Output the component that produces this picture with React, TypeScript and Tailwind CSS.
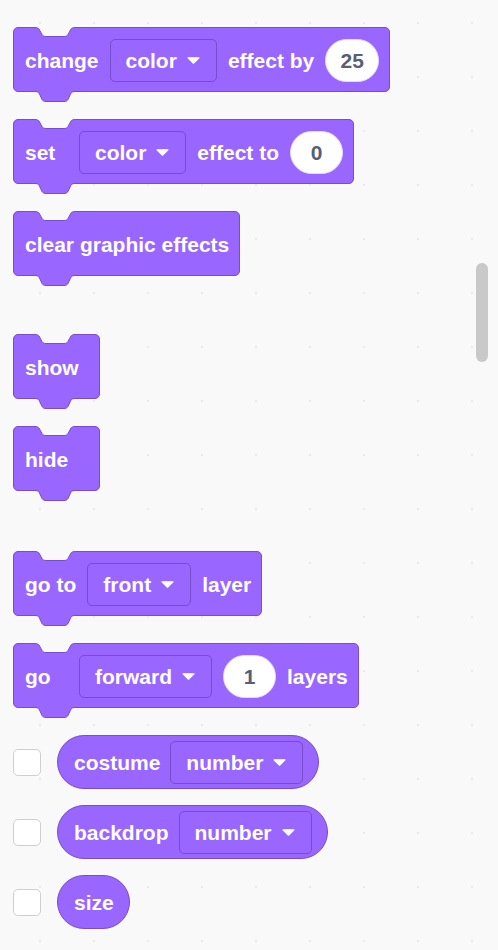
import React from 'react';

const PURPLE = '#9966FF';
const EDGE = '#774DCB';
const PAGE = '#f9f9f9';

const notchD =
  'M0,0.5 C2,0.5 3,1 4,2 L7,7.5 C8,9 9,9.5 11,9.5 H29 C31,9.5 32,9 33,7.5 L36,2 C37,1 38,0.5 40,0.5';
const tabD =
  'M0,0.5 C2,0.5 3,1 4,2 L7,8.5 C8,10 9,10.5 11,10.5 H29 C31,10.5 32,10 33,8.5 L36,2 C37,1 38,0.5 40,0.5';

const Caret: React.FC = () => (
  <svg width="13" height="7" viewBox="0 0 13 7" className="shrink-0">
    <path d="M1,0.8 H12 L6.5,6.2 Z" fill="#fff" stroke="#fff" strokeWidth="1.2" strokeLinejoin="round" />
  </svg>
);

const Dropdown: React.FC<{ label: string }> = ({ label }) => (
  <div className="flex h-[43px] shrink-0 items-center gap-[10px] rounded-[5px] border border-[#774DCB] bg-[#9966FF] pl-[15px] pr-[16px]">
    <span>{label}</span>
    <Caret />
  </div>
);

const NumberInput: React.FC<{ value: string; wide?: boolean }> = ({ value, wide }) => (
  <div
    className={
      wide
        ? 'flex h-[43px] w-[54px] shrink-0 items-center justify-center rounded-full border border-[#e4dcf5] bg-white text-[#575E75]'
        : 'flex h-[43px] w-[53px] shrink-0 items-center justify-center rounded-full border border-[#e4dcf5] bg-white text-[#575E75]'
    }
  >
    {value}
  </div>
);

interface StackProps {
  children: React.ReactNode;
  className?: string;
}

const Stack: React.FC<StackProps> = ({ children, className = '' }) => (
  <div
    className={`relative flex h-[65px] min-w-[87px] items-center gap-[11px] rounded-[5px] border border-[#774DCB] bg-[#9966FF] pl-[11px] pr-[10px] pt-[1px] ${className}`}
  >
    {children}
    {/* top notch */}
    <svg width="40" height="12" viewBox="0 0 40 12" className="absolute left-[21px] top-[-1px]">
      <path d={`${notchD} L40,0 L0,0 Z`} fill={PAGE} />
      <path d={notchD} fill="none" stroke={EDGE} strokeWidth="1" />
    </svg>
    {/* bottom tab */}
    <svg width="40" height="12" viewBox="0 0 40 12" className="absolute left-[21px] top-full">
      <path d={`${tabD} L40,0 L0,0 Z`} fill={PURPLE} />
      <path d={tabD} fill="none" stroke={EDGE} strokeWidth="1" />
    </svg>
  </div>
);

const Reporter: React.FC<{ children: React.ReactNode; className?: string }> = ({ children, className = '' }) => (
  <div className={`flex items-center gap-[16px] ${className}`}>
    <div className="h-[27px] w-[28px] rounded-[5px] border-[1.5px] border-[#cfcfcf] bg-white" />
    <div className="flex h-[54px] items-center gap-[10px] rounded-full border border-[#774DCB] bg-[#9966FF] pl-[16px] pr-[15px]">
      {children}
    </div>
  </div>
);

export default function App() {
  return (
    <div className="relative h-[950px] w-[498px] overflow-hidden bg-[#f9f9f9] bg-[radial-gradient(circle,#ebebeb_1px,transparent_1.6px)] bg-size-[54px_54px] bg-position-[13px_-4px] font-['Liberation_Sans',Arial,sans-serif] text-[21px] font-bold leading-none text-white">
      <div className="flex flex-col items-start pl-[13px] pt-[27px]">
        <Stack>
          <span>change</span>
          <Dropdown label="color" />
          <span>effect by</span>
          <NumberInput value="25" wide />
        </Stack>

        <Stack className="mt-[27px]">
          <span className="min-w-[43px]">set</span>
          <Dropdown label="color" />
          <span>effect to</span>
          <NumberInput value="0" />
        </Stack>

        <Stack className="mt-[27px]">
          <span>clear graphic effects</span>
        </Stack>

        <Stack className="mt-[58px]">
          <span>show</span>
        </Stack>

        <Stack className="mt-[27px]">
          <span>hide</span>
        </Stack>

        <Stack className="mt-[60px]">
          <span>go to</span>
          <Dropdown label="front" />
          <span>layer</span>
        </Stack>

        <Stack className="mt-[27px]">
          <span className="min-w-[43px]">go</span>
          <Dropdown label="forward" />
          <NumberInput value="1" />
          <span>layers</span>
        </Stack>

        <Reporter className="mt-[27px]">
          <span>costume</span>
          <Dropdown label="number" />
        </Reporter>

        <Reporter className="mt-[16px]">
          <span>backdrop</span>
          <Dropdown label="number" />
        </Reporter>

        <Reporter className="mt-[16px]">
          <span>size</span>
        </Reporter>
      </div>

      {/* scrollbar thumb */}
      <div className="absolute left-[476px] top-[263px] h-[99px] w-[12px] rounded-full bg-[#c9c9c9]" />
    </div>
  );
}
